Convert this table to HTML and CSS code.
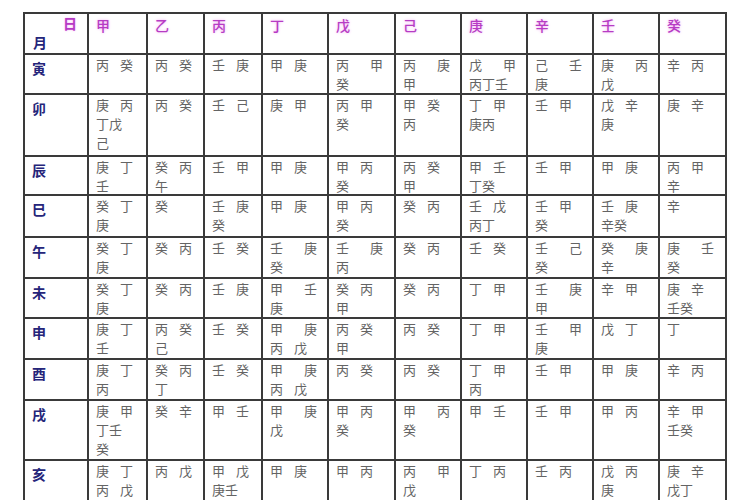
FILE: index.html
```html
<!DOCTYPE html>
<html lang="zh">
<head>
<meta charset="utf-8">
<title>调候用神表</title>
<link rel="stylesheet" href="styles.css">
</head>
<body>
<div class="tbl">
  <div class="c corner"><span class="ri">日</span><span class="yue">月</span></div>
  <div class="c h">甲</div><div class="c h">乙</div><div class="c h">丙</div><div class="c h">丁</div><div class="c h">戊</div>
  <div class="c h">己</div><div class="c h">庚</div><div class="c h">辛</div><div class="c h">壬</div><div class="c h">癸</div>

  <div class="c b">寅</div>
  <div class="c">丙 癸</div><div class="c">丙 癸</div><div class="c">壬 庚</div><div class="c">甲 庚</div>
  <div class="c"><span class="j">丙 甲</span>癸</div>
  <div class="c"><span class="j">丙 庚</span>甲</div>
  <div class="c"><span class="j">戊 甲</span>丙丁壬</div>
  <div class="c"><span class="j">己 壬</span>庚</div>
  <div class="c"><span class="j">庚 丙</span>戊</div>
  <div class="c">辛 丙</div>

  <div class="c b">卯</div>
  <div class="c">庚 丙<br>丁戊<br>己</div><div class="c">丙 癸</div><div class="c">壬 己</div><div class="c">庚 甲</div>
  <div class="c">丙 甲<br>癸</div><div class="c">甲 癸<br>丙</div><div class="c">丁 甲<br>庚丙</div><div class="c">壬 甲</div>
  <div class="c">戊 辛<br>庚</div><div class="c">庚 辛</div>

  <div class="c b">辰</div>
  <div class="c">庚 丁<br>壬</div><div class="c">癸 丙<br>午</div><div class="c">壬 甲</div><div class="c">甲 庚</div>
  <div class="c">甲 丙<br>癸</div><div class="c">丙 癸<br>甲</div><div class="c">甲 壬<br>丁癸</div><div class="c">壬 甲</div>
  <div class="c">甲 庚</div><div class="c">丙 甲<br>辛</div>

  <div class="c b">巳</div>
  <div class="c">癸 丁<br>庚</div><div class="c">癸</div><div class="c">壬 庚<br>癸</div><div class="c">甲 庚</div>
  <div class="c">甲 丙<br>癸</div><div class="c">癸 丙</div><div class="c">壬 戊<br>丙丁</div><div class="c">壬 甲<br>癸</div>
  <div class="c">壬 庚<br>辛癸</div><div class="c">辛</div>

  <div class="c b">午</div>
  <div class="c">癸 丁<br>庚</div><div class="c">癸 丙</div><div class="c">壬 癸</div>
  <div class="c"><span class="j">壬 庚</span>癸</div>
  <div class="c"><span class="j">壬 庚</span>丙</div>
  <div class="c">癸 丙</div><div class="c">壬 癸</div>
  <div class="c"><span class="j">壬 己</span>癸</div>
  <div class="c"><span class="j">癸 庚</span>辛</div>
  <div class="c"><span class="j">庚 壬</span>癸</div>

  <div class="c b">未</div>
  <div class="c">癸 丁<br>庚</div><div class="c">癸 丙</div><div class="c">壬 庚</div>
  <div class="c"><span class="j">甲 壬</span>庚</div>
  <div class="c">癸 丙<br>甲</div><div class="c">癸 丙</div><div class="c">丁 甲</div>
  <div class="c"><span class="j">壬 庚</span>甲</div>
  <div class="c">辛 甲</div><div class="c">庚 辛<br>壬癸</div>

  <div class="c b">申</div>
  <div class="c">庚 丁<br>壬</div><div class="c">丙 癸<br>己</div><div class="c">壬 癸</div>
  <div class="c"><span class="j">甲 庚</span>丙 戊</div>
  <div class="c">丙 癸<br>甲</div><div class="c">丙 癸</div><div class="c">丁 甲</div>
  <div class="c"><span class="j">壬 甲</span>庚</div>
  <div class="c">戊 丁</div><div class="c">丁</div>

  <div class="c b">酉</div>
  <div class="c">庚 丁<br>丙</div><div class="c">癸 丙<br>丁</div><div class="c">壬 癸</div>
  <div class="c"><span class="j">甲 庚</span>丙 戊</div>
  <div class="c">丙 癸</div><div class="c">丙 癸</div><div class="c">丁 甲<br>丙</div><div class="c">壬 甲</div>
  <div class="c">甲 庚</div><div class="c">辛 丙</div>

  <div class="c b">戌</div>
  <div class="c">庚 甲<br>丁壬<br>癸</div><div class="c">癸 辛</div><div class="c">甲 壬</div>
  <div class="c"><span class="j">甲 庚</span>戊</div>
  <div class="c">甲 丙<br>癸</div>
  <div class="c"><span class="j">甲 丙</span>癸</div>
  <div class="c">甲 壬</div><div class="c">壬 甲</div><div class="c">甲 丙</div><div class="c">辛 甲<br>壬癸</div>

  <div class="c b">亥</div>
  <div class="c">庚 丁<br>丙 戊</div><div class="c">丙 戊</div><div class="c">甲 戊<br>庚壬</div><div class="c">甲 庚</div>
  <div class="c">甲 丙</div>
  <div class="c"><span class="j">丙 甲</span>戊</div>
  <div class="c">丁 丙</div><div class="c">壬 丙</div><div class="c">戊 丙<br>庚</div><div class="c">庚 辛<br>戊丁</div>
</div>
</body>
</html>
```

FILE: styles.css
```css
html, body {
  margin: 0;
  height: 500px;
  overflow: hidden;
  background: #ffffff;
}

body {
  font-family: "Noto Sans CJK SC", "Noto Sans CJK TC", sans-serif;
}

.tbl {
  display: grid;
  grid-template-columns: 62px 57px 55px 56px 64px 65px 64px 64px 64px 64px 65px;
  grid-template-rows: 39px 38px 60px 37px 40px 39px 38px 39px 39px 58px 60px;
  gap: 2px;
  padding: 2px;
  background: #3a3a3a;
  width: max-content;
  margin: 12px 0 0 23px;
}

.c {
  background: #ffffff;
  padding: 0 0 0 7px;
  font-size: 13px;
  line-height: 19px;
  color: #646464;
  word-spacing: 8px;
  overflow: hidden;
}

.j {
  display: block;
  width: 47px;
  text-align: justify;
  text-align-last: justify;
  word-spacing: 0;
}

.h {
  padding-top: 2px;
  font-size: 14px;
  font-weight: 500;
  color: #b63cc4;
  text-shadow: 0 0 3px #f4b0f4;
}

.b {
  padding-top: 4px;
  font-size: 14px;
  font-weight: bold;
  color: #25257a;
}

.corner {
  display: flex;
  flex-direction: column;
  justify-content: space-between;
  padding: 0 10px 1px 8px;
}

.ri {
  align-self: flex-end;
  font-size: 14px;
  font-weight: bold;
  color: #b63cc4;
  text-shadow: 0 0 2px #f4b0f4;
}

.yue {
  align-self: flex-start;
  font-size: 14px;
  font-weight: bold;
  color: #25257a;
}
```
